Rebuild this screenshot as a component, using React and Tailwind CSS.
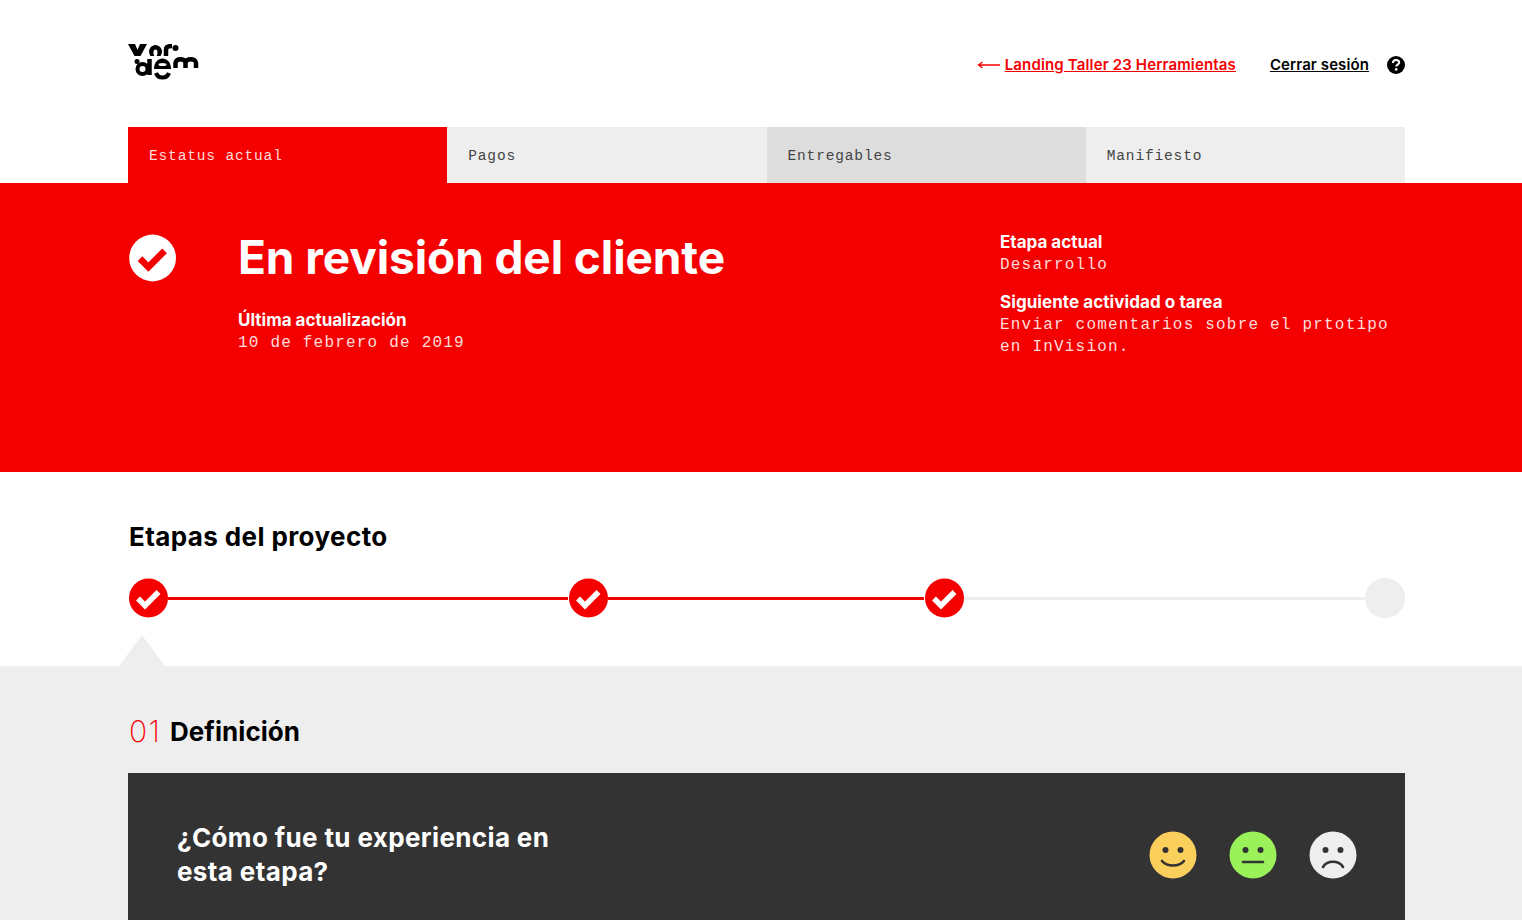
const sans = "font-['Inter',sans-serif]";
const mono = "font-['Liberation_Mono',monospace]";

const Logo = () => (
  <svg width="72" height="36" viewBox="0 0 72 36" fill="none" className="block">
    {/* top row */}
    <path d="M0 0H7L9.500 6L12 0H19L12.500 12H6.500Z" fill="#000" />
    <path d="M22.500 12C20.500 9 20.500 6 22.500 3.500C25 0 30 0 32.500 3.500C34.500 6 34.500 9 32.500 12H28.500C30 10 30 5.500 27.500 5.500C25 5.500 25 10 26.500 12Z" fill="#000" />
    <path d="M38 12V5.500C38 3 40 2 44 2" stroke="#000" strokeWidth="4.500" />
    <circle cx="47.500" cy="4" r="3" fill="#000" />
    {/* bottom row, turned over */}
    <circle cx="9" cy="17.500" r="2.500" fill="#000" />
    <circle cx="14.500" cy="25" r="5" stroke="#000" strokeWidth="4" />
    <path d="M21.500 15V31" stroke="#000" strokeWidth="4.500" />
    <path d="M26 25C26 11 43 11 43 25Z" fill="#000" />
    <ellipse cx="34.500" cy="20.500" rx="4" ry="1.500" fill="#fff" />
    <path d="M28 29C30 35 39 35 41 29" stroke="#000" strokeWidth="4" />
    <path d="M47.500 24V19C47.500 14 57.500 14 57.500 19V24M57.500 19C57.500 14 68 14 68 19V24" stroke="#000" strokeWidth="4.500" />
  </svg>
);

const Check = ({ size, circle, tick }) => (
  <svg width={size} height={size} viewBox="0 0 40 40" className="block shrink-0">
    <circle cx="20.500" cy="20" r="19.500" fill={circle} />
    <path d="M10 20.500L17 27.500L30.500 14" fill="none" stroke={tick} strokeWidth="5.500" />
  </svg>
);

const Face = ({ bg, mouth }) => (
  <svg width="48" height="48" viewBox="0 0 48 48" className="block">
    <circle cx="24" cy="24" r="23.500" fill={bg} />
    <circle cx="16.500" cy="19" r="3" fill="#333" />
    <circle cx="31.500" cy="19" r="3" fill="#333" />
    <path d={mouth} fill="none" stroke="#333" strokeWidth="2.600" strokeLinecap="round" />
  </svg>
);

const Tab = ({ label, className }) => (
  <div className={`flex-1 flex items-center pl-[21px] pt-[3px] h-14 ${mono} text-[14.5px] tracking-[0.85px] ${className}`}>
    {label}
  </div>
);

const App = () => {
  return (
    <div className={`h-screen overflow-hidden bg-white ${sans}`}>
      {/* Top bar */}
      <div className="h-[127px] ml-[128px] mr-[117px] flex items-center justify-between pt-[3px]">
        <div className="-mt-[6px]">
          <Logo />
        </div>
        <div className="flex items-center text-[15px] font-semibold">
          <svg width="23" height="10" viewBox="0 0 23 10" className="block mr-[5px]">
            <path d="M23 5H2M5.500 2L1.500 5L5.500 8" fill="none" stroke="#f50000" strokeWidth="1.300" />
          </svg>
          <a className="text-[#f50000] underline tracking-[0.15px] mr-[34px]">Landing Taller 23 Herramientas</a>
          <a className="text-black underline tracking-[0.1px] mr-[18px]">Cerrar sesión</a>
          <svg width="18" height="18" viewBox="0 0 18 18" className="block">
            <circle cx="9" cy="9" r="9" fill="#000" />
            <path d="M5.900 7C6 5 7.300 4 9.100 4C11 4 12.200 5.100 12.200 6.600C12.200 8.600 9.200 8.700 9.200 10.600" fill="none" stroke="#fff" strokeWidth="2" />
            <circle cx="9.200" cy="13.400" r="1.300" fill="#fff" />
          </svg>
        </div>
      </div>

      {/* Tabs */}
      <div className="flex ml-[128px] mr-[117px]">
        <Tab label="Estatus actual" className="bg-[#f50000] text-[#ffdcdc]" />
        <Tab label="Pagos" className="bg-[#eeeeee] text-[#444]" />
        <Tab label="Entregables" className="bg-[#dddddd] text-[#444]" />
        <Tab label="Manifiesto" className="bg-[#eeeeee] text-[#444]" />
      </div>

      {/* Status hero */}
      <div className="h-[289px] bg-[#f50000] text-white">
        <div className="ml-[128px] flex pt-[51px]">
          <Check size={48} circle="#fff" tick="#f50000" />
          <div className="ml-[62px] w-[762px]">
            <h1 className="text-[46px] leading-[48px] font-bold tracking-[-0.1px] -mt-[1px]">En revisión del cliente</h1>
            <div className="mt-[28px] text-[17px] leading-[22px] font-bold">Última actualización</div>
            <div className={`${mono} mt-px text-[16px] leading-[22px] tracking-[1.2px] text-[#ffdcdc]`}>10 de febrero de 2019</div>
          </div>
          <div className="-mt-[3px]">
            <div className="text-[17px] leading-[22px] font-bold">Etapa actual</div>
            <div className={`${mono} mt-px text-[16px] leading-[22px] tracking-[1.2px] text-[#ffdcdc]`}>Desarrollo</div>
            <div className="mt-[15px] text-[17px] leading-[22px] font-bold tracking-[0.07px]">Siguiente actividad o tarea</div>
            <div className={`${mono} mt-px text-[16px] leading-[22px] tracking-[1.2px] text-[#ffdcdc] w-[400px]`}>
              Enviar comentarios sobre el prtotipo en InVision.
            </div>
          </div>
        </div>
      </div>

      {/* Stages */}
      <div className="relative h-[194px] ml-[128px] mr-[117px] pt-[48px]">
        <h2 className="ml-px text-[26px] leading-[34px] font-bold tracking-[0.4px] text-black">Etapas del proyecto</h2>
        <div className="flex items-center mt-[24px]">
          <Check size={40} circle="#f50000" tick="#fff" />
          <div className="flex-[400] h-[3px] bg-[#f50000]" />
          <Check size={40} circle="#f50000" tick="#fff" />
          <div className="flex-[317] h-[3px] bg-[#f50000]" />
          <Check size={40} circle="#f50000" tick="#fff" />
          <div className="flex-[401] h-[3px] bg-[#eeeeee]" />
          <div className="w-10 h-10 rounded-full bg-[#eeeeee]" />
        </div>
        <div className="absolute -left-[9px] bottom-0 w-[46px] h-[31px] bg-[#eeeeee] [clip-path:polygon(50%_0,100%_100%,0_100%)]" />
      </div>

      {/* Stage detail */}
      <div className="bg-[#eeeeee] pl-[128px] pr-[117px] pt-[48px] pb-10">
        <div className="flex items-center h-[34px]">
          <span className="text-[30px] text-[#f50000] font-extralight tracking-[1.5px] w-[42px] ml-px -mr-px">01</span>
          <h3 className="text-[26px] font-bold tracking-[0.05px] text-black">Definición</h3>
        </div>
        <div className="mt-[25px] h-[200px] bg-[#333333] flex items-start justify-between pl-[49px] pr-[48px] pt-[48px]">
          <p className="text-[26px] leading-[34px] font-bold tracking-[0.37px] text-white w-[400px]">
            ¿Cómo fue tu experiencia en esta etapa?
          </p>
          <div className="flex gap-8 mt-[10px]">
            <Face bg="#fbcf5b" mouth="M13 30C18 36 30 36 35 30" />
            <Face bg="#9bf159" mouth="M14 31H34" />
            <Face bg="#eeeeee" mouth="M14 36C18 29 30 29 34 36" />
          </div>
        </div>
      </div>
    </div>
  );
};

export default App;
